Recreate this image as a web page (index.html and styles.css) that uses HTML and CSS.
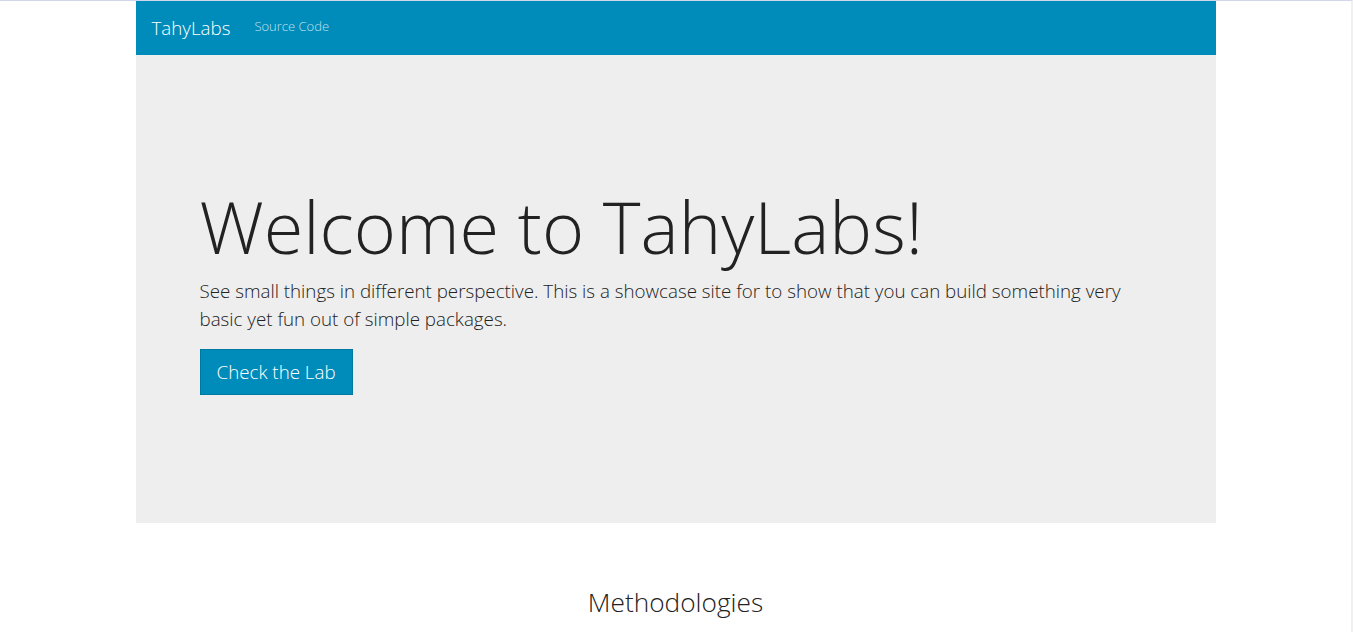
FILE: index.html
```html
<!DOCTYPE html>
<html lang="en">
<head>
<meta charset="utf-8">
<title>TahyLabs</title>
<link rel="stylesheet" href="styles.css">
</head>
<body>
<div class="page">
  <div class="container">
    <nav class="navbar">
      <a class="brand" href="#">TahyLabs</a>
      <a class="nav-link" href="#">Source Code</a>
    </nav>
    <section class="jumbotron">
      <h1 class="display">Welcome to TahyLabs!</h1>
      <p class="lead">See small things in different perspective. This is a showcase site for to show that you can build something very basic yet fun out of simple packages.</p>
      <a class="btn" href="#">Check the Lab</a>
    </section>
    <section class="methods">
      <h2 class="section-title">Methodologies</h2>
    </section>
  </div>
</div>
</body>
</html>
```
FILE: styles.css
```css
html, body {
  margin: 0;
  padding: 0;
}
body {
  background: #fff;
  font-family: "Open Sans", "Liberation Sans", sans-serif;
  font-weight: 300;
  color: #222;
  overflow: hidden;
  height: 633px;
}
.page {
  border-top: 1px solid #d2d6ea;
  border-right: 2px solid #f0f0f0;
  height: 632px;
  box-sizing: border-box;
}
.container {
  width: 1080px;
  margin: 0 auto;
}
.navbar {
  background: #008cba;
  height: 54px;
  display: flex;
  align-items: center;
  padding: 0 16px;
  box-sizing: border-box;
}
.brand {
  color: #fff;
  text-decoration: none;
  font-size: 18.75px;
  margin-right: 24px;
  margin-top: -1px;
}
.nav-link {
  color: rgba(255, 255, 255, 0.75);
  text-decoration: none;
  font-size: 13px;
  margin-top: -4px;
}
.jumbotron {
  background: #eee;
  height: 468px;
  box-sizing: border-box;
  padding: 0 64px;
  display: flex;
  flex-direction: column;
  justify-content: center;
  align-items: flex-start;
}
.display {
  font-size: 72px;
  font-weight: 300;
  line-height: 1.2;
  margin: 0 0 7px;
  color: #222;
}
.lead {
  font-size: 18.75px;
  line-height: 28px;
  margin: 0 0 16px;
  color: #222;
}
.btn {
  display: inline-block;
  background: #008cba;
  border: 1px solid #0079a1;
  color: #fff;
  text-decoration: none;
  font-size: 18.75px;
  line-height: 28px;
  padding: 8px 16px;
}
.methods {
  padding-top: 64px;
  text-align: center;
}
.section-title {
  font-size: 26.25px;
  font-weight: 300;
  margin: 0;
  line-height: 1.2;
}
```
